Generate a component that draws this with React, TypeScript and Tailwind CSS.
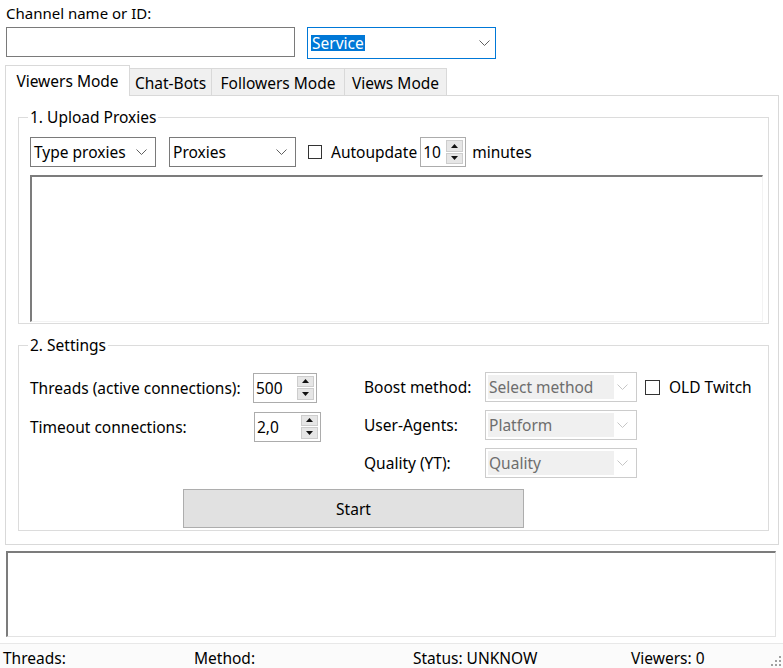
import React from 'react';

type ComboProps = {
  value: string;
  className?: string;
};

function Chevron({ muted }: { muted?: boolean }) {
  return (
    <svg width="11" height="6" viewBox="0 0 11 6" className="shrink-0">
      <path d="M0.5 0.5L5.5 5.5L10.5 0.5" fill="none" stroke={muted ? '#c6c6c6' : '#606060'} strokeWidth="1" />
    </svg>
  );
}

function Combo({ value, className = '' }: ComboProps) {
  return (
    <div className={`flex h-[30px] items-center justify-between border border-[#7a7a7a] bg-white pl-[3px] pr-[8px] ${className}`}>
      <span className="leading-[20px]">{value}</span>
      <Chevron />
    </div>
  );
}

// disabled, editable combobox: grey text area + faded arrow
function DisabledCombo({ value }: { value: string }) {
  return (
    <div className="flex h-[30px] w-[152px] items-center border border-[#cccccc] bg-white py-[2px] pl-[2px] pr-[8px]">
      <div className="flex h-full w-[126px] items-center bg-[#f0f0f0] pl-[1px] leading-[20px] text-[#6d6d6d]">{value}</div>
      <div className="flex flex-1 justify-end">
        <Chevron muted />
      </div>
    </div>
  );
}

function Arrow({ up }: { up?: boolean }) {
  return (
    <svg width="7" height="4" viewBox="0 0 7 4">
      <path d={up ? 'M0 4L3.5 0L7 4Z' : 'M0 0L3.5 4L7 0Z'} fill="#111" />
    </svg>
  );
}

function Spin({ value, className = '' }: ComboProps) {
  return (
    <div className={`flex h-[30px] items-center border border-[#acacac] bg-white pl-[2px] pr-[2px] ${className}`}>
      <span className="flex-1 leading-[20px]">{value}</span>
      <div className="flex h-[24px] w-[17px] flex-col gap-[1px]">
        <div className="flex flex-1 items-center justify-center border border-[#cdcdcd] bg-[#e6e6e6]">
          <Arrow up />
        </div>
        <div className="flex flex-1 items-center justify-center border border-[#cdcdcd] bg-[#e6e6e6]">
          <Arrow />
        </div>
      </div>
    </div>
  );
}

function CheckBox({ className = '' }: { className?: string }) {
  return <span className={`block h-[14px] w-[14px] shrink-0 border border-[#333333] bg-white ${className}`} />;
}

function Grip() {
  return (
    <svg width="12" height="12" viewBox="0 0 12 12">
      {[
        [9, 1],
        [9, 5],
        [5, 5],
        [9, 9],
        [5, 9],
        [1, 9],
      ].map(([x, y]) => (
        <rect key={`${x}-${y}`} x={x} y={y} width="2" height="2" fill="#a0a0a0" />
      ))}
    </svg>
  );
}

const tabs = [
  { label: 'Chat-Bots', w: 'w-[82px]' },
  { label: 'Followers Mode', w: 'w-[133px]' },
  { label: 'Views Mode', w: 'w-[102px]' },
];

export default function App() {
  return (
    <div className="flex h-[668px] w-[783px] flex-col overflow-hidden bg-white font-['Noto_Sans',sans-serif] text-[15.5px] text-black">
      <div className="ml-[6px] pt-[3px] text-[15px] leading-[20px]">Channel name or ID:</div>

      <div className="ml-[6px] mt-[4px] flex items-start">
        <div className="h-[30px] w-[289px] border border-[#7a7a7a] bg-white" />
        <div className="ml-[12px] flex h-[32px] w-[189px] items-center justify-between border border-[#0078d7] bg-white pl-[3px] pr-[5px]">
          <span className="bg-[#0078d7] px-[1px] leading-[16px] text-white">Service</span>
          <Chevron />
        </div>
      </div>

      {/* tab strip */}
      <div className="ml-[5px] mt-[6px] flex h-[30px] items-end">
        <div className="relative z-10 -mb-px flex h-[31px] w-[125px] items-center justify-center border border-b-0 border-[#d9d9d9] bg-white leading-[20px]">
          Viewers Mode
        </div>
        {tabs.map((t) => (
          <div
            key={t.label}
            className={`flex h-[27px] ${t.w} items-center justify-center border border-l-0 border-b-0 border-[#d9d9d9] bg-[#f0f0f0] pt-[2px] leading-[20px]`}
          >
            {t.label}
          </div>
        ))}
      </div>

      {/* tab page */}
      <div className="ml-[5px] h-[450px] w-[774px] border border-[#d9d9d9] bg-white">
        <fieldset className="ml-[12px] mt-[12px] w-[751px] border border-[#dcdcdc] pb-[1px] pl-[11px]">
          <legend className="-ml-[2px] px-[2px] leading-[18px]">1. Upload Proxies</legend>
          <div className="mt-[11px] flex h-[30px] items-center">
            <Combo value="Type proxies" className="w-[126px]" />
            <Combo value="Proxies" className="ml-[13px] w-[127px]" />
            <CheckBox className="ml-[12px]" />
            <span className="ml-[9px] leading-[20px]">Autoupdate</span>
            <Spin value="10" className="ml-[3px] w-[46px]" />
            <span className="ml-[6px] leading-[20px]">minutes</span>
          </div>
          <div className="mt-[8px] h-[147px] w-[733px] border-b border-l-2 border-r border-t-2 border-b-[#f3f3f3] border-l-[#7c7c7c] border-r-[#f3f3f3] border-t-[#7c7c7c] bg-white" />
        </fieldset>

        <fieldset className="ml-[12px] mt-[12px] w-[751px] border border-[#dcdcdc] pb-[2px] pl-[11px]">
          <legend className="-ml-[2px] px-[2px] leading-[18px]">2. Settings</legend>
          <div className="flex">
            <div className="mt-[19px] flex w-[334px] flex-col gap-[10px]">
              <div className="flex h-[29px] items-center">
                <span className="w-[223px] leading-[20px]">Threads (active connections):</span>
                <Spin value="500" className="h-[29px] w-[64px]" />
              </div>
              <div className="flex h-[29px] items-center">
                <span className="w-[224px] leading-[20px]">Timeout connections:</span>
                <Spin value="2,0" className="h-[29px] w-[67px]" />
              </div>
            </div>
            <div className="mt-[18px] flex flex-col gap-[8px]">
              <div className="flex h-[30px] items-center">
                <span className="w-[121px] leading-[20px]">Boost method:</span>
                <DisabledCombo value="Select method" />
                <CheckBox className="ml-[8px] h-[15px] w-[15px]" />
                <span className="ml-[9px] leading-[20px]">OLD Twitch</span>
              </div>
              <div className="flex h-[30px] items-center">
                <span className="w-[121px] leading-[20px]">User-Agents:</span>
                <DisabledCombo value="Platform" />
              </div>
              <div className="flex h-[30px] items-center">
                <span className="w-[121px] leading-[20px]">Quality (YT):</span>
                <DisabledCombo value="Quality" />
              </div>
            </div>
          </div>
          <div className="ml-[153px] mt-[11px] flex h-[39px] w-[341px] items-center justify-center border border-[#adadad] bg-[#e1e1e1] leading-[20px]">
            Start
          </div>
        </fieldset>
      </div>

      {/* log output */}
      <div className="ml-[6px] mt-[6px] h-[86px] w-[770px] border-b border-l-2 border-r border-t-2 border-b-[#e3e3e3] border-l-[#7c7c7c] border-r-[#e3e3e3] border-t-[#7c7c7c] bg-white" />

      {/* status strip */}
      <div className="mt-[6px] flex h-[25px] items-start border-t border-[#e8e8e8] bg-[#fbfbfb] pt-[4px] leading-[20px]">
        <span className="w-[194px] pl-[3px]">Threads:</span>
        <span className="w-[219px]">Method:</span>
        <span className="w-[218px]">Status: UNKNOW</span>
        <span className="flex-1">Viewers: 0</span>
        <div className="self-end pb-[1px] pr-[1px]">
          <Grip />
        </div>
      </div>
    </div>
  );
}
